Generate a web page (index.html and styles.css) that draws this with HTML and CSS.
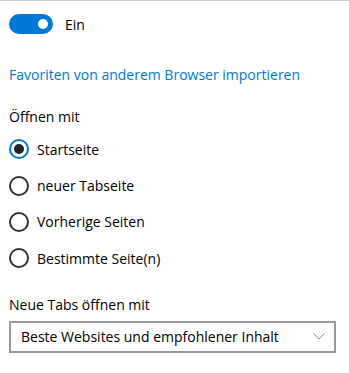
FILE: index.html
```html
<!DOCTYPE html>
<html lang="de">
<head>
  <meta charset="UTF-8">
  <title>Einstellungen</title>
  <link rel="stylesheet" href="styles.css">
</head>
<body>
  <div class="panel">
    <div class="toggle-row">
      <span class="toggle on"><span class="knob"></span></span>
      <span class="toggle-label">Ein</span>
    </div>

    <a class="link" href="#">Favoriten von anderem Browser importieren</a>

    <div class="group">
      <div class="group-title">Öffnen mit</div>
      <label class="radio"><span class="dot checked"></span>Startseite</label>
      <label class="radio"><span class="dot"></span>neuer Tabseite</label>
      <label class="radio"><span class="dot"></span>Vorherige Seiten</label>
      <label class="radio"><span class="dot"></span>Bestimmte Seite(n)</label>
    </div>

    <div class="group tabs">
      <div class="group-title">Neue Tabs öffnen mit</div>
      <div class="select">
        <span>Beste Websites und empfohlener Inhalt</span>
        <svg width="12" height="7" viewBox="0 0 12 7"><path d="M0.5 0.5 L6 6 L11.5 0.5" fill="none" stroke="#888" stroke-width="1"/></svg>
      </div>
    </div>
  </div>
</body>
</html>
```
FILE: styles.css
```css
body {
  margin: 0;
  font-family: 'Open Sans', 'Noto Sans', sans-serif;
  font-size: 14px;
  color: #000;
  background: #fff;
}

.panel {
  border-top: 1px solid #ccc;
  padding: 13px 9px 0 9px;
}

.toggle-row {
  display: flex;
  align-items: center;
  gap: 12px;
}

.toggle {
  width: 44px;
  height: 20px;
  border-radius: 10px;
  background: #0078d7;
  display: flex;
  align-items: center;
  justify-content: flex-end;
  padding-right: 5px;
  box-sizing: border-box;
}

.knob {
  width: 10px;
  height: 10px;
  border-radius: 50%;
  background: #fff;
}

.link {
  display: block;
  margin-top: 31px;
  color: #0078d7;
  text-decoration: none;
}

.group {
  margin-top: 23px;
}

.group-title {
  margin-bottom: 5px;
}

.radio {
  display: flex;
  align-items: center;
  gap: 8px;
  height: 36.4px;
}

.dot {
  width: 20px;
  height: 20px;
  box-sizing: border-box;
  border: 2px solid #333;
  border-radius: 50%;
  display: flex;
  align-items: center;
  justify-content: center;
}

.dot.checked {
  border-color: #0078d7;
}

.dot.checked::after {
  content: '';
  width: 10px;
  height: 10px;
  border-radius: 50%;
  background: #222;
}

.group.tabs {
  margin-top: 18px;
}

.select {
  margin-top: 7px;
  width: 327px;
  height: 32px;
  box-sizing: border-box;
  border: 2px solid #999;
  display: flex;
  align-items: center;
  justify-content: space-between;
  padding: 0 9px 0 10px;
}
```
